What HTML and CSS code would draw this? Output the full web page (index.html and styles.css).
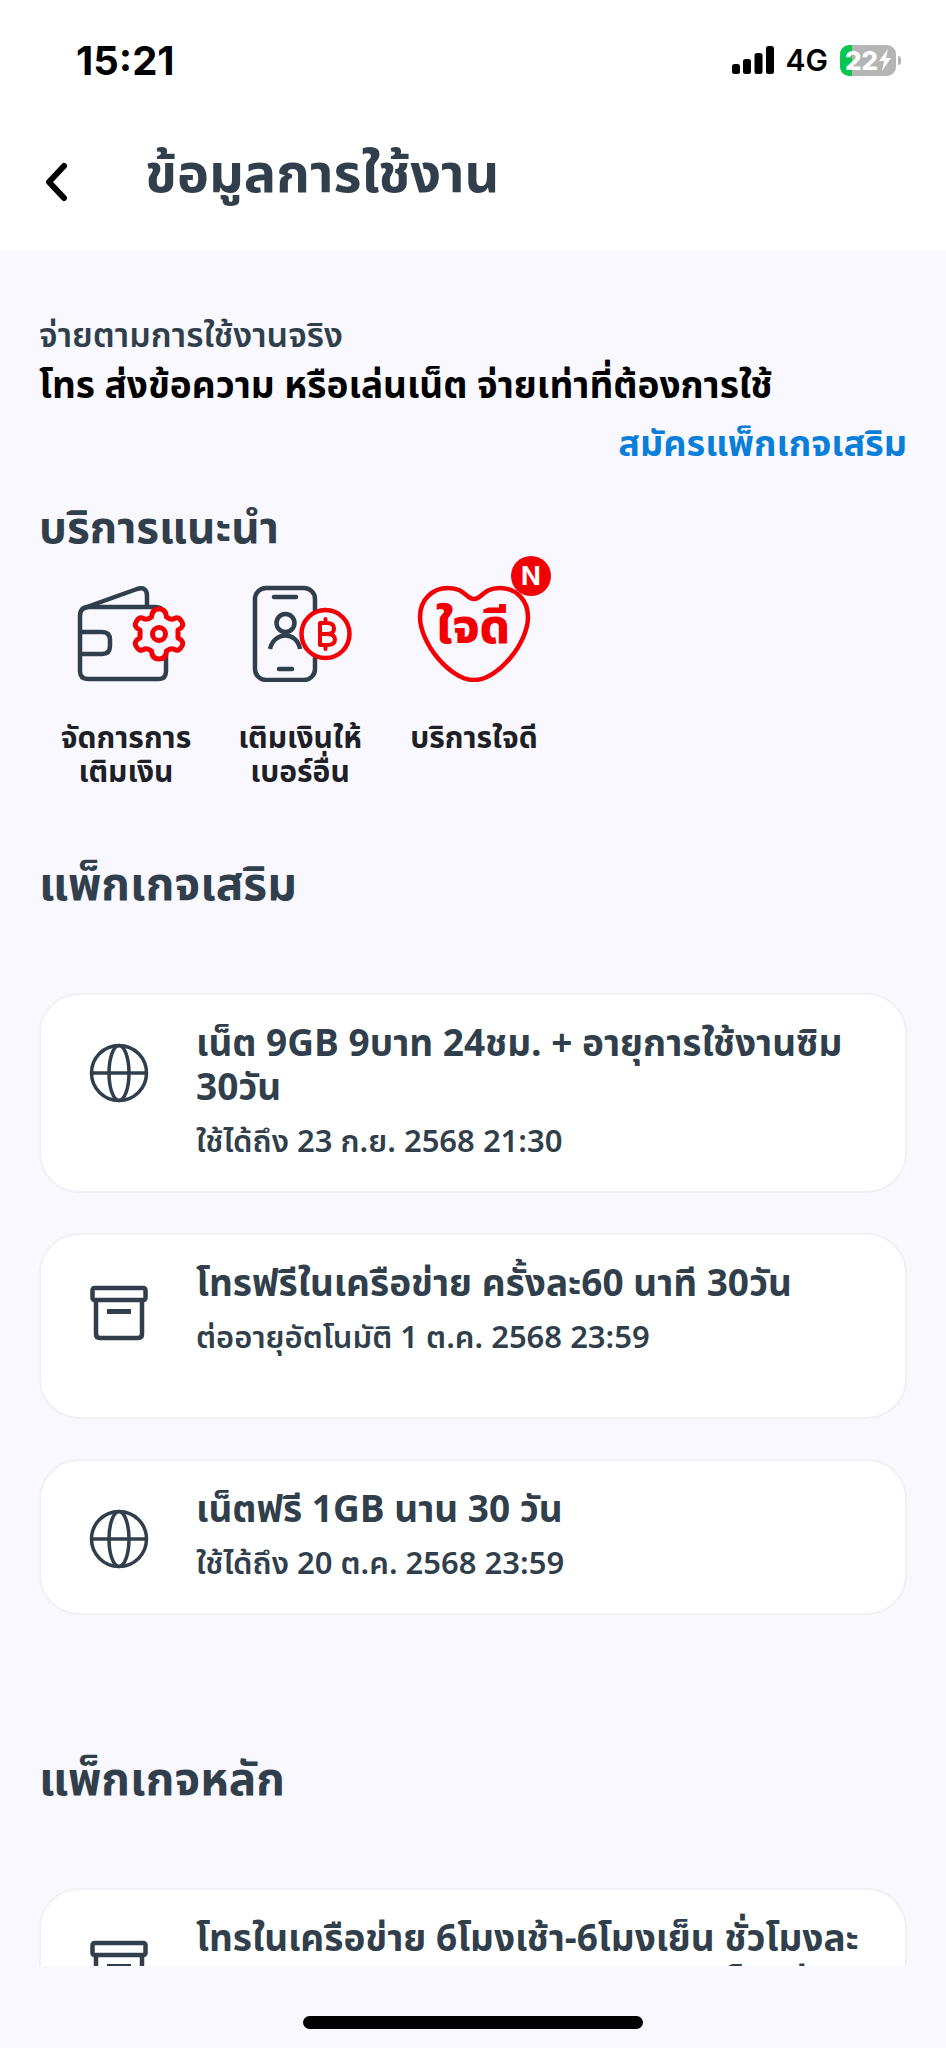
FILE: index.html
```html
<!DOCTYPE html>
<html lang="th">
<head>
<meta charset="utf-8">
<meta name="viewport" content="width=device-width, initial-scale=1">
<title>ข้อมูลการใช้งาน</title>
<link rel="stylesheet" href="styles.css">
</head>
<body>
<svg class="sprite" aria-hidden="true">
  <symbol id="globe" viewBox="0 0 60 60">
    <g fill="none" stroke="currentColor" stroke-width="3.500">
      <circle cx="30" cy="30" r="27.5"/>
      <ellipse cx="30" cy="30" rx="10" ry="27.5"/>
      <path d="M3 30h54"/>
    </g>
  </symbol>
  <symbol id="box" viewBox="0 0 60 60">
    <g fill="none" stroke="currentColor" stroke-width="4.500" stroke-linejoin="round">
      <rect x="3.500" y="5" width="53" height="12" rx="2"/>
      <path d="M7 17v34q0 4 4 4h38q4 0 4-4V17"/>
      <path d="M18 28.500h24" stroke-width="5"/>
    </g>
  </symbol>
</svg>
<div class="screen">
  <header class="top">
    <div class="status">
      <span class="clock">15:21</span>
      <div class="status-right">
        <svg class="signal" viewBox="0 0 42 28" aria-hidden="true">
          <rect x="0" y="18" width="8" height="10" rx="2.500"/><rect x="11" y="13" width="8" height="15" rx="2.500"/><rect x="22.500" y="7" width="8" height="21" rx="2.500"/><rect x="34" y="0" width="8" height="28" rx="2.500"/>
        </svg>
        <span class="network">4G</span>
        <div class="battery">
          <span class="level">22</span>
          <svg class="bolt" viewBox="0 0 12 22" aria-hidden="true"><path d="M9 0 0 12h5L3 22l9-13H7z" fill="#fff"/></svg>
        </div>
      </div>
    </div>
    <div class="bar">
      <button class="back" type="button" aria-label="กลับ">
        <svg viewBox="0 0 24 40" aria-hidden="true"><path d="M20 4 5 20l15 16" fill="none" stroke="#000" stroke-width="6" stroke-linecap="round" stroke-linejoin="round"/></svg>
      </button>
      <h1>ข้อมูลการใช้งาน</h1>
    </div>
  </header>
  <main class="content">
    <section class="plan">
      <p class="plan-kind">จ่ายตามการใช้งานจริง</p>
      <p class="plan-name">โทร ส่งข้อความ หรือเล่นเน็ต จ่ายเท่าที่ต้องการใช้</p>
      <a class="buy" href="#extra">สมัครแพ็กเกจเสริม</a>
    </section>
    <h2 class="services-title">บริการแนะนำ</h2>
    <nav class="services">
      <a class="service" href="#topup">
        <svg class="service-icon" viewBox="0 0 120 104" aria-hidden="true">
          <g fill="none" stroke="#303f4b" stroke-width="4.500" stroke-linejoin="round">
            <path d="M96 33q0-4-7-4H23q-9 0-9 9v55q0 8 8 8h71q7 0 7-8V72"/>
            <path d="M18 30 71 11q10-3 10 7v11"/>
            <path d="M14 54h22q8 0 8 8v6q0 8-8 8H14"/>
          </g>
          <path d="M85.500 39Q86 31 93 31Q100 31 100.500 39Q105 42.500 108.500 40.500Q113 38 116 44Q118.500 49 112 52V60Q118.500 63 116 68Q113 74 108.500 71.500Q105 69.500 100.500 73Q100 81 93 81Q86 81 85.500 73Q81 69.500 77.500 71.500Q73 74 70 68Q67.500 63 74 60V52Q67.500 49 70 44Q73 38 77.500 40.500Q81 42.500 85.500 39Z" fill="#f9f8fe" stroke="#f30005" stroke-width="5" stroke-linejoin="round"/>
          <circle cx="93" cy="56" r="6.500" fill="none" stroke="#f30005" stroke-width="5"/>
        </svg>
        <span>จัดการการ<br>เติมเงิน</span>
      </a>
      <a class="service" href="#transfer">
        <svg class="service-icon" viewBox="0 0 120 104" aria-hidden="true">
          <g fill="none" stroke="#303f4b" stroke-width="4.500" stroke-linecap="round">
            <rect x="15" y="10" width="60" height="92" rx="11"/>
            <path d="M34 19h22M39 91h13"/>
            <circle cx="45.500" cy="45" r="9"/>
            <path d="M30 71C34 53 57 53 60 71" stroke-linecap="butt"/>
          </g>
          <circle cx="85.500" cy="56" r="24" fill="#f9f8fe" stroke="#f30005" stroke-width="4.500"/>
          <path d="M80 45v22M80 45h7q7 0 7 5.500T87 56H80M87 56q8 0 8 5.500T87 67H80M85.500 41v4M85.500 67v4" fill="none" stroke="#f30005" stroke-width="4" stroke-linecap="round" stroke-linejoin="round"/>
        </svg>
        <span>เติมเงินให้<br>เบอร์อื่น</span>
      </a>
      <a class="service" href="#jaidee">
        <svg class="service-icon" viewBox="0 0 120 104" aria-hidden="true">
          <path d="M60 21C52 21 51 10 34 10C18 10 6 22 6 39C6 65 36 102 60 102S114 65 114 39C114 22 102 10 86 10C69 10 68 21 60 21Z" fill="none" stroke="#f30005" stroke-width="4.500" stroke-linejoin="round"/>
          <text class="heart-text" x="59" y="65" text-anchor="middle">ใจดี</text>
        </svg>
        <b class="new">N</b>
        <span>บริการใจดี</span>
      </a>
    </nav>
    <section class="packages" id="extra">
      <h2>แพ็กเกจเสริม</h2>
      <article class="card">
        <svg class="card-icon" aria-hidden="true"><use href="#globe"/></svg>
        <div><h3>เน็ต 9GB 9บาท 24ชม. + อายุการใช้งานซิม 30วัน</h3><p>ใช้ได้ถึง 23 ก.ย. 2568 21:30</p></div>
      </article>
      <article class="card card-renewing">
        <svg class="card-icon" aria-hidden="true"><use href="#box"/></svg>
        <div><h3>โทรฟรีในเครือข่าย ครั้งละ60 นาที 30วัน</h3><p>ต่ออายุอัตโนมัติ 1 ต.ค. 2568 23:59</p></div>
      </article>
      <article class="card">
        <svg class="card-icon" aria-hidden="true"><use href="#globe"/></svg>
        <div><h3>เน็ตฟรี 1GB นาน 30 วัน</h3><p>ใช้ได้ถึง 20 ต.ค. 2568 23:59</p></div>
      </article>
    </section>
    <section class="packages packages-main">
      <h2>แพ็กเกจหลัก</h2>
      <article class="card">
        <svg class="card-icon" aria-hidden="true"><use href="#box"/></svg>
        <div><h3>โทรในเครือข่าย 6โมงเช้า-6โมงเย็น ชั่วโมงละ 6บาท นอกเวลาราคา 99สต. ทุกการโทรต่อสาย</h3></div>
      </article>
    </section>
  </main>
  <footer class="home"><span class="home-bar"></span></footer>
</div>
</body>
</html>
```
FILE: styles.css
```css
* { box-sizing: border-box; }
body, h1, h2, h3, p { margin: 0; }
body {
  background: #f9f8fe;
  color: #303f4b;
  font-family: "Noto Sans Thai", "Prompt", "Noto Sans", "DejaVu Sans", sans-serif;
}
a { text-decoration: none; }
.sprite { display: none; }
.screen { height: 100vh; display: flex; flex-direction: column; }
.top { flex: none; background: #fff; padding: 36px 44px 0; }
.status {
  display: flex; align-items: center; justify-content: space-between;
  height: 48px; padding-left: 32px;
  font-family: Inter, sans-serif; color: #000;
}
.clock { font-size: 40px; font-weight: 700; }
.status-right { display: flex; align-items: center; gap: 12px; }
.signal { width: 42px; height: 28px; }
.network { font-size: 30px; font-weight: 600; }
.battery {
  position: relative; display: flex; align-items: center; justify-content: center;
  width: 56px; height: 31px; border-radius: 9px; gap: 1px; margin-right: 6px;
  background: linear-gradient(to right, #0ac650 12px, #b5b5b5 12px);
}
.battery::after {
  content: ""; position: absolute; left: 58px; top: 11px;
  width: 3px; height: 9px; border-radius: 0 3px 3px 0; background: #b5b5b5;
}
.level { font-size: 26px; font-weight: 800; color: #fff; }
.bolt { width: 12px; height: 22px; }
.bar { display: flex; align-items: center; height: 166px; gap: 77px; padding-top: 18px; }
.back { display: flex; padding: 12px 0 0; border: 0; background: none; }
.back svg { width: 24px; height: 40px; }
h1 { font-size: 54px; line-height: 64px; }
.content { flex: 1; min-height: 0; overflow: hidden; padding: 65px 39px 0; }
.plan { display: flex; flex-direction: column; }
.plan-kind { font-size: 34px; line-height: 44px; font-weight: 600; }
.plan-name { font-size: 37px; line-height: 56px; font-weight: 700; color: #000; }
.buy { align-self: flex-end; font-size: 36px; line-height: 60px; font-weight: 700; color: #0a7fd9; }
h2 { font-size: 46px; line-height: 60px; font-weight: 700; }
.services-title { margin-top: 25px; font-size: 44px; }
.services { display: flex; }
.service {
  position: relative; display: flex; flex-direction: column; align-items: center;
  width: 174px; gap: 40px; padding-top: 18px;
  font-size: 30px; line-height: 34px; font-weight: 700; text-align: center; color: #1d2026;
}
.service-icon { width: 120px; height: 104px; }
.heart-text { font-size: 48px; font-weight: 800; fill: #f30005; }
.new {
  position: absolute; right: 10px; top: -4px;
  width: 40px; height: 40px; border-radius: 50%; background: #f30005; color: #fff;
  font: 700 26px/40px Inter, sans-serif;
}
.packages { margin-top: 66px; display: flex; flex-direction: column; gap: 40px; }
.packages-main { margin-top: 136px; }
.packages h2 { margin-bottom: 37px; }
.card {
  display: flex; gap: 47px; padding: 28px 32px 28px 48px;
  background: #fff; border: 2px solid #f1f1f5; border-radius: 40px;
}
.card-icon { flex: none; width: 60px; height: 60px; margin-top: 20px; }
.card-renewing { padding-bottom: 58px; }
h3 { font-size: 37px; line-height: 44px; font-weight: 700; }
.card p { font-size: 31px; line-height: 40px; margin-top: 12px; font-weight: 600; }
.home { flex: none; height: 82px; display: flex; justify-content: center; padding-top: 50px; }
.home-bar { width: 36%; height: 13px; border-radius: 7px; background: #000; }
```
